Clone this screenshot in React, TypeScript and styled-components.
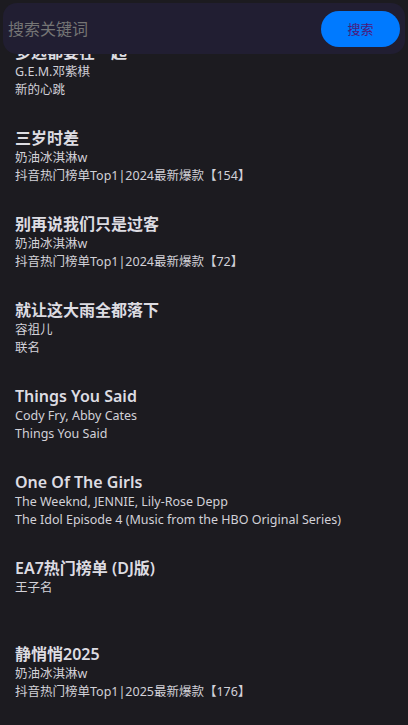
import React from 'react';
import styled, { createGlobalStyle } from 'styled-components';

const GlobalStyle = createGlobalStyle`
  html, body {
    margin: 0;
    padding: 0;
    background: #1c1b20;
  }
  body {
    font-family: "Noto Sans", "Noto Sans CJK SC", sans-serif;
  }
`;

const Page = styled.div`
  position: relative;
  min-height: 725px;
  background: #1c1b20;
`;

const SearchBar = styled.div`
  position: fixed;
  top: 3px;
  left: 3px;
  right: 3px;
  height: 51px;
  z-index: 2;
  display: flex;
  align-items: center;
  justify-content: space-between;
  box-sizing: border-box;
  padding: 0 5px 0 5px;
  background: #211e32;
  border-radius: 14px;
`;

const SearchInput = styled.input`
  flex: 1;
  min-width: 0;
  background: transparent;
  border: none;
  outline: none;
  color: #e0dfe6;
  font-family: inherit;
  font-size: 16px;
  padding: 0;

  ::placeholder {
    color: #8c8994;
  }
`;

const SearchButton = styled.button`
  width: 79px;
  height: 36px;
  border: none;
  border-radius: 18px;
  background: #007aff;
  color: #4a1a7c;
  font-family: inherit;
  font-size: 13px;
  cursor: pointer;
`;

const List = styled.div`
  display: flex;
  flex-direction: column;
  padding-top: 31px;
`;

const Item = styled.div`
  height: 86px;
  box-sizing: border-box;
  padding: 10px 15px 0;
  display: flex;
  flex-direction: column;
`;

const Title = styled.div`
  color: #dddce2;
  font-size: 16px;
  font-weight: 600;
  line-height: 22px;
`;

const Sub = styled.div`
  color: #d2d1d8;
  font-size: 12.5px;
  line-height: 18px;
`;

interface Song {
  title: string;
  artist: string;
  album?: string;
}

const songs: Song[] = [
  { title: '多远都要在一起', artist: 'G.E.M.邓紫棋', album: '新的心跳' },
  { title: '三岁时差', artist: '奶油冰淇淋w', album: '抖音热门榜单Top1|2024最新爆款【154】' },
  { title: '别再说我们只是过客', artist: '奶油冰淇淋w', album: '抖音热门榜单Top1|2024最新爆款【72】' },
  { title: '就让这大雨全都落下', artist: '容祖儿', album: '联名' },
  { title: 'Things You Said', artist: 'Cody Fry, Abby Cates', album: 'Things You Said' },
  {
    title: 'One Of The Girls',
    artist: 'The Weeknd, JENNIE, Lily-Rose Depp',
    album: 'The Idol Episode 4 (Music from the HBO Original Series)',
  },
  { title: 'EA7热门榜单 (DJ版)', artist: '王子名' },
  { title: '静悄悄2025', artist: '奶油冰淇淋w', album: '抖音热门榜单Top1|2025最新爆款【176】' },
];

export default function App(): React.ReactElement {
  return (
    <Page>
      <GlobalStyle />
      <SearchBar>
        <SearchInput type="text" placeholder="搜索关键词" />
        <SearchButton>搜索</SearchButton>
      </SearchBar>
      <List>
        {songs.map((song) => (
          <Item key={song.title}>
            <Title>{song.title}</Title>
            <Sub>{song.artist}</Sub>
            {song.album && <Sub>{song.album}</Sub>}
          </Item>
        ))}
      </List>
    </Page>
  );
}
